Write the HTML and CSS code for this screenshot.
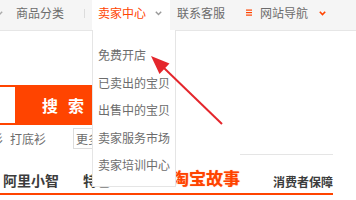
FILE: index.html
```html
<!DOCTYPE html>
<html lang="zh-CN">
<head>
<meta charset="utf-8">
<title>卖家中心</title>
<link rel="stylesheet" href="styles.css">
</head>
<body>
<div class="page">
  <div class="topbar">
    <svg class="chev chev-cut" width="7" height="5" viewBox="0 0 7 5"><polyline points="0.8,0.8 3.5,3.6 6.2,0.8" fill="none" stroke="#aaa" stroke-width="1.4"/></svg>
    <span class="nav-item cat">商品分类</span>
    <span class="sep"></span>
    <div class="nav-tab">
      <span class="tab-text">卖家中心</span>
      <svg class="chev tab-chev" width="7" height="5" viewBox="0 0 7 5"><polyline points="0.8,0.8 3.5,3.6 6.2,0.8" fill="none" stroke="#999" stroke-width="1.4"/></svg>
    </div>
    <span class="nav-item contact">联系客服</span>
    <svg class="menu-icon" width="6" height="7" viewBox="0 0 6 7"><rect x="0" y="0.5" width="6" height="1.2" fill="#ff4400"/><rect x="0" y="3" width="6" height="1.2" fill="#ff4400"/><rect x="0" y="5.5" width="6" height="1.2" fill="#ff4400"/></svg>
    <span class="nav-item site">网站导航</span>
    <svg class="chev site-chev" width="7" height="5" viewBox="0 0 7 5"><polyline points="0.8,0.8 3.5,3.6 6.2,0.8" fill="none" stroke="#ff4400" stroke-width="1.6"/></svg>
  </div>

  <div class="content">
    <div class="search">
      <div class="search-input"></div>
      <div class="search-btn">搜索</div>
    </div>
    <div class="hot">
      <span class="hot-cut">衫</span>
      <span class="hot-word">打底衫</span>
      <span class="more">更多</span>
    </div>
    <div class="tabs">
      <span class="tab-b">阿里小智</span>
      <span class="tab-b tab-2">特色</span>
      <span class="story">淘宝故事</span>
      <span class="guard">消费者保障</span>
    </div>
  </div>

  <ul class="dropdown">
    <li>免费开店</li>
    <li>已卖出的宝贝</li>
    <li>出售中的宝贝</li>
    <li>卖家服务市场</li>
    <li>卖家培训中心</li>
  </ul>

  <svg class="pointer" width="356" height="200" viewBox="0 0 356 200">
    <line x1="164" y1="68" x2="222" y2="124" stroke="#e4262c" stroke-width="2"/>
    <polygon points="151,56 169.5,63.5 159.5,74" fill="#e4262c"/>
  </svg>
</div>
</body>
</html>
```

FILE: styles.css
```css
* { box-sizing: border-box; }

body {
  margin: 0;
  background: #fff;
}

.page {
  position: relative;
  width: 356px;
  height: 200px;
  overflow: hidden;
  font-family: "Noto Sans CJK SC", "Noto Sans", sans-serif;
  font-size: 12px;
  color: #6c6c6c;
}

/* top bar */
.topbar {
  display: flex;
  align-items: flex-start;
  height: 31px;
  background: #f5f5f5;
  border-bottom: 1px solid #e6e6e6;
  line-height: 26px;
}

.chev { display: block; margin-top: 11px; }
.chev-cut { margin-left: -4px; }

.nav-item { white-space: nowrap; }
.cat { margin-left: 13px; }

.sep {
  width: 1px;
  height: 9px;
  margin-top: 9px;
  margin-left: 20px;
  background: #dcdcdc;
}

.nav-tab {
  display: flex;
  align-items: flex-start;
  width: 78px;
  height: 30px;
  margin-left: 7px;
  padding-left: 6px;
  background: #fff;
}
.tab-text { color: #ff4400; }
.tab-chev { margin-left: 9px; }

.contact { margin-left: 7px; }
.menu-icon { display: block; margin-left: 21px; margin-top: 9px; }
.site { margin-left: 8px; }
.site-chev { margin-left: 11px; }

/* content */
.content { padding-top: 54px; }

.search {
  display: flex;
  width: 110px;
  height: 40px;
  padding: 2px 0;
  background: #ff4400;
}
.search-input { width: 15px; background: #fff; }
.search-btn {
  padding-left: 27px;
  color: #fff;
  font-size: 16px;
  font-weight: bold;
  letter-spacing: 10px;
  line-height: 36px;
}

.hot {
  display: flex;
  align-items: center;
  height: 21px;
  margin-top: 3px;
  line-height: 21px;
  white-space: nowrap;
}
.hot-cut { margin-left: -9px; }
.hot-word { margin-left: 7px; }
.more {
  margin-left: 27px;
  height: 21px;
  padding: 0 2px;
  border: 1px solid #dddddd;
  line-height: 19px;
}

.tabs {
  display: flex;
  align-items: flex-start;
  width: 333px;
  height: 41px;
  margin-top: 5px;
  border-bottom: 2px solid #ff4400;
  white-space: nowrap;
}
.tab-b {
  margin-top: 16px;
  margin-left: 3px;
  font-size: 14px;
  font-weight: bold;
  line-height: 20px;
  color: #3c3c3c;
}
.tab-2 { margin-left: 24px; }
.story {
  margin-top: 14px;
  margin-left: 61px;
  font-size: 17px;
  font-weight: bold;
  line-height: 20px;
  color: #ff4400;
  text-shadow: 0 0 1px #ff8a5c;
}
.guard {
  align-self: stretch;
  width: 95px;
  margin-left: auto;
  padding-top: 19px;
  border-top: 1px solid #e5e5e5;
  text-align: right;
  font-weight: bold;
  line-height: 16px;
  color: #3c3c3c;
}

/* dropdown overlay */
.dropdown {
  position: absolute;
  left: 92px;
  top: 30px;
  width: 84px;
  margin: 0;
  padding: 11px 0 7.5px 5px;
  list-style: none;
  background: #fff;
  border: 1px solid #e5e5e5;
  border-top: none;
  line-height: 27.5px;
  white-space: nowrap;
}

.pointer {
  position: absolute;
  left: 0;
  top: 0;
  pointer-events: none;
}
```
